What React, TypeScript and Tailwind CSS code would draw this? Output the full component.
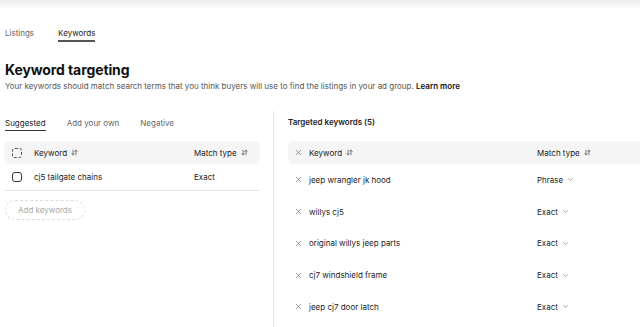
import { X, ChevronDown, ArrowDownUp } from 'lucide-react';

const targeted = [
  { kw: 'jeep wrangler jk hood', type: 'Phrase' },
  { kw: 'willys cj5', type: 'Exact' },
  { kw: 'original willys jeep parts', type: 'Exact' },
  { kw: 'cj7 windshield frame', type: 'Exact' },
  { kw: 'jeep cj7 door latch', type: 'Exact' },
];

function SortIcon() {
  return <ArrowDownUp className="w-[7px] h-[7px] ml-[4px] text-[#333]" strokeWidth={2.2} />;
}

function Checkbox({ dashed }: { dashed?: boolean }) {
  return (
    <span
      className={`inline-block w-[10px] h-[10px] rounded-[3px] border ${dashed ? 'border-dashed border-[#555]' : 'border-[#333]'}`}
    />
  );
}

export default function App() {
  return (
    <div className="w-[640px] h-[327px] overflow-hidden bg-white text-[#222] font-['Inter',sans-serif]">
      <div className="h-[9px] bg-gradient-to-b from-[#e9e9e9] to-white" />

      <div className="px-[5px]">
        <div className="flex gap-[24px] mt-[19px] text-[8px] leading-[10px]">
          <span className="text-[#666] pb-[3px]">Listings</span>
          <span className="text-[#222] pb-[2px] border-b-2 border-[#555]">Keywords</span>
        </div>

        <h1 className="mt-[19px] text-[14px] leading-[18px] font-bold text-[#111] tracking-[-0.1px]">Keyword targeting</h1>
        <p className="mt-[2px] text-[8px] leading-[10px] text-[#555]">
          Your keywords should match search terms that you think buyers will use to find the listings in your ad group.{' '}
          <span className="text-[#111] font-semibold">Learn more</span>
        </p>
      </div>

      <div className="flex mt-[15px]">
        <div className="w-[273px] pl-[4px] pr-[13px] pt-[12px]">
          <div className="flex gap-[21px] text-[8px] leading-[10px] pl-[1px]">
            <span className="text-[#222] pb-[2px] border-b border-[#333]">Suggested</span>
            <span className="text-[#666]">Add your own</span>
            <span className="text-[#666]">Negative</span>
          </div>

          <div className="mt-[10px] h-[23px] rounded-[5px] bg-[#f5f5f5] flex items-center text-[8px] text-[#222] px-[8px]">
            <Checkbox dashed />
            <span className="ml-[12px] flex items-center">Keyword<SortIcon /></span>
            <span className="ml-auto flex items-center w-[58px]">Match type<SortIcon /></span>
          </div>

          <div className="h-[27px] flex items-center text-[8px] text-[#222] px-[8px] border-b border-[#e6e6e6]">
            <Checkbox />
            <span className="ml-[12px]">cj5 tailgate chains</span>
            <span className="ml-auto w-[58px]">Exact</span>
          </div>

          <button className="mt-[9px] ml-[1px] h-[20px] px-[12px] rounded-full border border-dashed border-[#ddd] text-[8px] text-[#aaa]">
            Add keywords
          </button>
        </div>

        <div className="flex-1 mt-[5px] border-l border-[#e3e3e3] pl-[14px] pt-[6px] h-[230px]">
          <div className="text-[8px] leading-[10px] font-semibold text-[#222]">Targeted keywords (5)</div>

          <div className="mt-[14px] h-[23px] rounded-l-[5px] bg-[#f5f5f5] flex items-center text-[8px] text-[#222] pl-[6px]">
            <X className="w-[9px] h-[9px] text-[#555]" strokeWidth={1.5} />
            <span className="ml-[6px] flex items-center">Keyword<SortIcon /></span>
            <span className="ml-[184px] flex items-center">Match type<SortIcon /></span>
          </div>

          {targeted.map((t) => (
            <div key={t.kw} className="h-[31.75px] flex items-center text-[8px] text-[#222] pl-[6px]">
              <X className="w-[9px] h-[9px] text-[#555]" strokeWidth={1.5} />
              <span className="ml-[6px] w-[228px]">{t.kw}</span>
              <span className="flex items-center">
                {t.type}
                <ChevronDown className="w-[7px] h-[7px] ml-[4px] text-[#555]" strokeWidth={2} />
              </span>
            </div>
          ))}
        </div>
      </div>
    </div>
  );
}
